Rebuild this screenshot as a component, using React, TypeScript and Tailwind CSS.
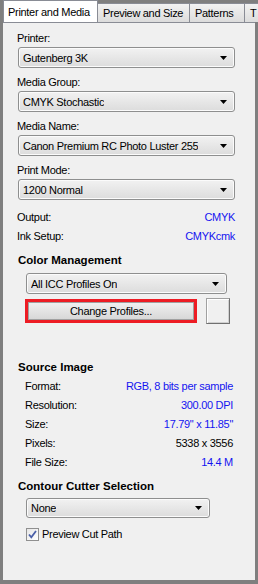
import React from "react";

const font = { fontFamily: '"Liberation Sans", Arial, sans-serif' };

function Select({ value, className = "" }: { value: string; className?: string }) {
  return (
    <div
      className={`flex items-center justify-between rounded-[3px] border border-[#8e8f8f] bg-gradient-to-b from-[#f2f2f2] to-[#dcdcdc] pl-[4px] pr-[7px] text-black shadow-[inset_0_0_0_1px_#fbfbfb] ${className}`}
    >
      <span className="truncate">{value}</span>
      <svg width="7" height="4" viewBox="0 0 7 4" className="shrink-0">
        <path d="M0 0h7L3.5 4z" fill="#000" />
      </svg>
    </div>
  );
}

function InfoRow({ label, value, blue = true }: { label: string; value: string; blue?: boolean }) {
  return (
    <div className="flex h-[19px] items-center justify-between">
      <span>{label}</span>
      <span className={blue ? "text-[#1414f0]" : "text-black"}>{value}</span>
    </div>
  );
}

export default function App() {
  const tabs = ["Preview and Size", "Patterns", "T"];

  return (
    <div
      className="flex h-[584px] w-[258px] flex-col overflow-hidden bg-[#7f7f7f] pb-[4px] pl-[3px] text-[11px] leading-[14px] tracking-[-0.3px] text-black"
      style={font}
    >
      {/* Tabs */}
      <div className="flex h-[22px] shrink-0 items-end whitespace-nowrap">
        <div className="relative z-10 flex h-[22px] w-[95px] shrink-0 items-center border border-b-0 border-[#898c95] bg-white pl-[4px]">
          Printer and Media
        </div>
        {tabs.map((t) => (
          <div
            key={t}
            className={`flex h-[19px] shrink-0 items-center overflow-hidden border border-b-0 border-l-0 border-[#898c95] bg-gradient-to-b from-[#f2f2f2] to-[#dcdcdc] pl-[5px] ${
              t === "T" ? "w-[20px]" : t === "Patterns" ? "w-[55px]" : "w-[92px]"
            }`}
          >
            {t}
          </div>
        ))}
      </div>

      {/* Panel */}
      <div className="mr-[3px] flex flex-1 flex-col border-t border-[#898c95] bg-[#f0f0f0] pl-[14px] pr-[20px]">
        <div className="mt-[8px]">Printer:</div>
        <Select value="Gutenberg 3K" className="mt-[2px] ml-[1px] h-[21px]" />

        <div className="mt-[7px]">Media Group:</div>
        <Select value="CMYK Stochastic" className="mt-[2px] ml-[1px] h-[21px]" />

        <div className="mt-[7px]">Media Name:</div>
        <Select value="Canon Premium RC Photo Luster 255" className="mt-[2px] ml-[1px] h-[21px]" />

        <div className="mt-[7px]">Print Mode:</div>
        <Select value="1200 Normal" className="mt-[2px] ml-[1px] h-[21px]" />

        <div className="mt-[7px]">
          <InfoRow label="Output:" value="CMYK" />
          <InfoRow label="Ink Setup:" value="CMYKcmk" />
        </div>

        {/* Color Management */}
        <div className="mt-[8px] ml-[1px] text-[11.5px] font-bold tracking-normal">Color Management</div>
        <div className="pl-[8px] pr-[8px]">
          <Select value="All ICC Profiles On" className="mt-[6px] ml-[1px] h-[21px]" />
          <div className="mt-[5px] flex items-start gap-[9px]">
            <div className="h-[24px] w-[172px] shrink-0 border-[3px] border-[#ed1c24]">
              <div className="flex h-full items-center justify-center border border-[#a0a0a0] bg-gradient-to-b from-[#f0f0f0] to-[#d8d8d8]">
                Change Profiles...
              </div>
            </div>
            <div className="-mt-[1px] h-[26px] w-[24px] shrink-0 border border-t-[#a0a0a0] border-l-[#a0a0a0] border-r-[#707070] border-b-[#707070] bg-[#f0f0f0] shadow-[inset_1px_1px_0_#ffffff,inset_-1px_-1px_0_#d0d0d0]" />
          </div>
        </div>

        {/* Source Image */}
        <div className="mt-[36px] ml-[1px] text-[11.5px] font-bold tracking-normal">Source Image</div>
        <div className="mt-[2px] mr-[2px] pl-[8px]">
          <InfoRow label="Format:" value="RGB, 8 bits per sample" />
          <InfoRow label="Resolution:" value="300.00 DPI" />
          <InfoRow label="Size:" value={'17.79" x 11.85"'} />
          <InfoRow label="Pixels:" value="5338 x 3556" blue={false} />
          <InfoRow label="File Size:" value="14.4 M" />
        </div>

        {/* Contour Cutter */}
        <div className="mt-[8px] ml-[1px] text-[11.5px] font-bold tracking-normal">Contour Cutter Selection</div>
        <div className="pl-[9px] pr-[25px]">
          <Select value="None" className="mt-[5px] h-[20px]" />
          <div className="mt-[9px] flex items-center gap-[3px]">
            <div className="flex h-[13px] w-[13px] items-center justify-center border border-[#8f8f8f] bg-gradient-to-br from-[#e6e6e6] to-[#ffffff]">
              <svg width="9" height="9" viewBox="0 0 9 9">
                <path d="M1 4.5l2.3 2.8L8 1" fill="none" stroke="#4a5fa8" strokeWidth="1.8" />
              </svg>
            </div>
            <span>Preview Cut Path</span>
          </div>
        </div>
      </div>
    </div>
  );
}
